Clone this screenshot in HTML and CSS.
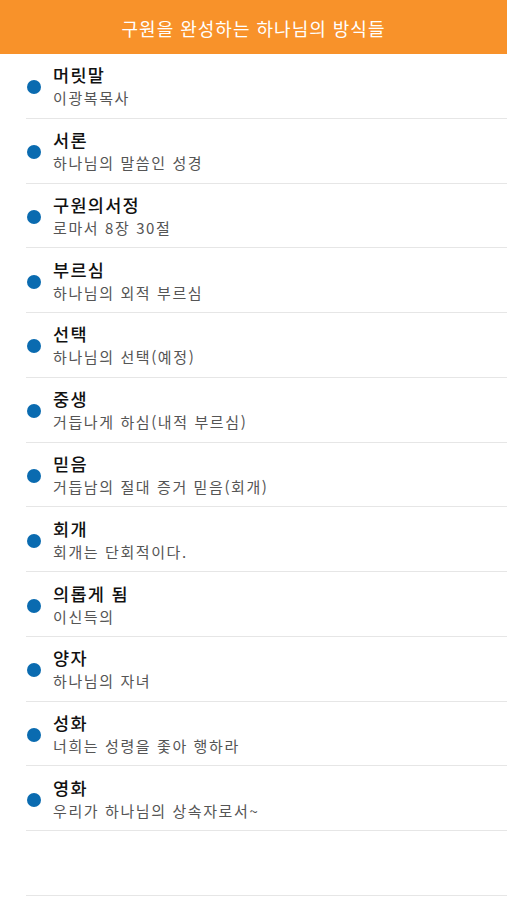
FILE: index.html
```html
<!DOCTYPE html>
<html lang="ko">
<head>
    <meta charset="UTF-8">
    <meta name="viewport" content="width=device-width, initial-scale=1.0">
    <title>구원을 완성하는 하나님의 방식들</title>
    <link rel="stylesheet" href="styles.css">
</head>
<body>
    <header class="top-bar">구원을 완성하는 하나님의 방식들</header>
    <ul class="chapter-list">
        <li class="chapter"><span class="dot"></span><div class="chapter-text"><p class="chapter-title">머릿말</p><p class="chapter-sub">이광복목사</p></div></li>
        <li class="chapter"><span class="dot"></span><div class="chapter-text"><p class="chapter-title">서론</p><p class="chapter-sub">하나님의 말씀인 성경</p></div></li>
        <li class="chapter"><span class="dot"></span><div class="chapter-text"><p class="chapter-title">구원의서정</p><p class="chapter-sub">로마서 8장 30절</p></div></li>
        <li class="chapter"><span class="dot"></span><div class="chapter-text"><p class="chapter-title">부르심</p><p class="chapter-sub">하나님의 외적 부르심</p></div></li>
        <li class="chapter"><span class="dot"></span><div class="chapter-text"><p class="chapter-title">선택</p><p class="chapter-sub">하나님의 선택(예정)</p></div></li>
        <li class="chapter"><span class="dot"></span><div class="chapter-text"><p class="chapter-title">중생</p><p class="chapter-sub">거듭나게 하심(내적 부르심)</p></div></li>
        <li class="chapter"><span class="dot"></span><div class="chapter-text"><p class="chapter-title">믿음</p><p class="chapter-sub">거듭남의 절대 증거 믿음(회개)</p></div></li>
        <li class="chapter"><span class="dot"></span><div class="chapter-text"><p class="chapter-title">회개</p><p class="chapter-sub">회개는 단회적이다.</p></div></li>
        <li class="chapter"><span class="dot"></span><div class="chapter-text"><p class="chapter-title">의롭게 됨</p><p class="chapter-sub">이신득의</p></div></li>
        <li class="chapter"><span class="dot"></span><div class="chapter-text"><p class="chapter-title">양자</p><p class="chapter-sub">하나님의 자녀</p></div></li>
        <li class="chapter"><span class="dot"></span><div class="chapter-text"><p class="chapter-title">성화</p><p class="chapter-sub">너희는 성령을 좇아 행하라</p></div></li>
        <li class="chapter"><span class="dot"></span><div class="chapter-text"><p class="chapter-title">영화</p><p class="chapter-sub">우리가 하나님의 상속자로서~</p></div></li>
        <li class="chapter empty"></li>
    </ul>
</body>
</html>
```

FILE: styles.css
```css
body {
    margin: 0;
    background-color: #fff;
    font-family: 'Noto Sans CJK KR', 'Noto Sans', sans-serif;
}

.top-bar {
    height: 54px;
    display: flex;
    justify-content: center;
    align-items: center;
    background-color: #f8922a;
    color: #fff;
    font-size: 18px;
    letter-spacing: 1px;
    padding-top: 2px;
    box-sizing: border-box;
}

.chapter-list {
    list-style: none;
    margin: 0;
    padding: 0;
}

.chapter {
    height: 63.77px;
    margin-left: 26px;
    border-bottom: 1px solid #e6e6e6;
    display: flex;
    align-items: center;
}

.dot {
    width: 14px;
    height: 14px;
    border-radius: 50%;
    background-color: #0a6bb0;
    margin-left: 1px;
    margin-right: 12px;
    margin-top: 3px;
    flex-shrink: 0;
}

.chapter-text p {
    margin: 0;
}

.chapter-title {
    font-size: 17.5px;
    letter-spacing: 1.3px;
    line-height: 25px;
    color: #111;
    font-weight: 500;
}

.chapter-sub {
    font-size: 15px;
    letter-spacing: 1.6px;
    line-height: 22px;
    color: #555;
}
```
